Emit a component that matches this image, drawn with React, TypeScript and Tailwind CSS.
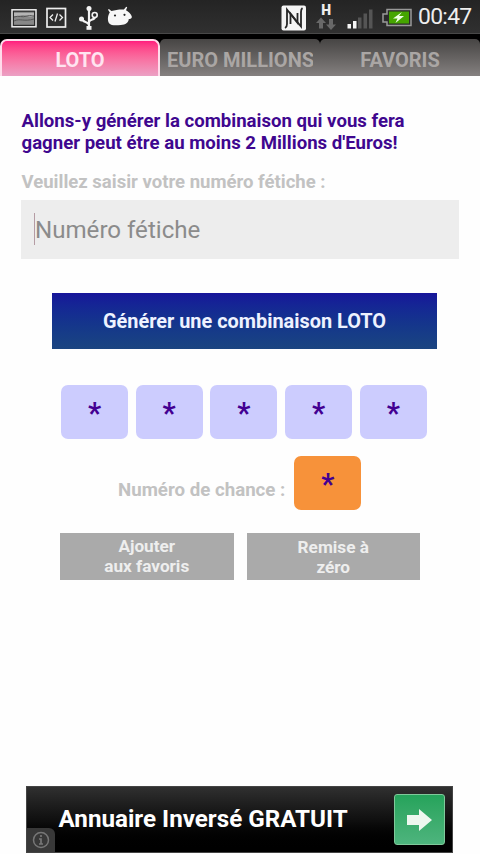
import React from "react";

function StatusBar() {
  return (
    <header className="h-[34px] shrink-0 flex items-center justify-between bg-linear-to-b from-[#242424] to-[#303030] border-b border-[#484848] pl-[11px] pr-[8px]">
      <svg width="124" height="32" viewBox="0 0 124 32" fill="none">
        <rect x="1" y="8.800" width="24" height="17" stroke="#eee" strokeWidth="1.500" />
        <rect x="3" y="10.800" width="20" height="13" fill="#888" />
        <path d="M3 12h20v3c-5 2-8-1-11-1s-6 2-9 1z" fill="#b5b5b5" />
        <path d="M3 16c5-2 8 1 13-1 4-1 5 0 7 0M3 20c6-3 10 1 20-2" stroke="#555" />
        <rect x="36" y="7.500" width="18.500" height="18.500" stroke="#eee" strokeWidth="1.700" />
        <path d="m42 13.500-3 3 3 3M48.500 13.500l3 3-3 3M46.500 12.500l-2.500 8" stroke="#eee" strokeWidth="1.300" />
        <path d="M78 26V8M78 24c-1-4-7-2-7-7M78 21c1-3 6-2 6-5" stroke="#f4f4f4" strokeWidth="2.200" />
        <circle cx="78" cy="7.500" r="2.500" fill="#f4f4f4" />
        <circle cx="70.500" cy="18" r="2.500" fill="#f4f4f4" />
        <circle cx="83.700" cy="14" r="2.500" stroke="#f4f4f4" strokeWidth="1.600" />
        <rect x="75.500" y="25" width="5" height="3.800" fill="#f4f4f4" />
        <path d="M98.800 11.500 97 8.800l.9-.7 2.500 2c4-1.300 8-1.800 12.500-1.600l2.300-2.800 1 .6-1.200 3c2.500 1.500 5.200 3.700 5.800 6.200.4 2-1.500 2.500-3 2.500-.5 4-3 5.500-8 6-5 .6-10 .5-11.500-1.500-2-2.500-1.800-8 .5-11z" fill="#f7f7f7" />
        <circle cx="104" cy="14.500" r="1.100" fill="#282828" />
        <circle cx="113.500" cy="13.800" r="1.100" fill="#282828" />
      </svg>
      <div className="flex items-center">
        <svg width="133" height="32" viewBox="280 0 133 32" fill="none">
          <rect x="281.500" y="4.500" width="24.500" height="25" rx="2" fill="#f5f5f5" />
          <path d="M285 27q2-1 2-4V8.500l10.500 13.500V12" stroke="#262626" strokeWidth="1.800" />
          <path d="M302.500 7q-1.500 1-1.500 4v14.500L290.500 12.500V23" stroke="#262626" strokeWidth="1.800" />
          <text x="321.300" y="14.200" fill="#eee" fontSize="14" fontWeight="900" fontFamily="Roboto, sans-serif">H</text>
          <path d="m321 16.500 5 5.500h-3v5.500h-4V22h-3zM331 29l-5-5.500h3V18h4v5.500h3z" fill="#686868" />
          <path d="M347.500 23h3.500v4.500h-3.500zM353 20h3.500v7.500H353z" fill="#f5f5f5" />
          <path d="M358 16.500h3.500v11H358zM363.500 12.500h3.500v15h-3.500zM369 8.500h3.500v19H369z" fill="#555" />
          <path d="M387 8.500h24v16h-24v-3.500h-4v-8h4z" stroke="#999" strokeWidth="1.500" />
          <path d="M389 10.500h20v12h-20z" fill="#45a500" />
          <path d="m402 11-9 6.500h4.500l-2 4.500 8.500-7h-5z" fill="#efffe5" />
        </svg>
        <span className="ml-[5px] w-[54px] pt-px text-[22.900px] leading-8 tracking-[-0.7px] whitespace-nowrap text-[#eee]">00:47</span>
      </div>
    </header>
  );
}

function Tabs() {
  return (
    <nav className="h-[42px] shrink-0 bg-black pt-[5px] flex text-[20px] font-bold">
      <div className="w-[160px] h-[37px] rounded-t-[7px] border-2 border-b-0 border-[#ffdceb] bg-linear-to-b from-[#ff1b7e] to-[#eba0c4] flex items-center justify-center text-[#ffe4f0] pt-[3px]">LOTO</div>
      <div className="w-[160px] h-[37px] rounded-t-[5px] bg-linear-to-b from-[#474544] to-[#858180] flex items-center pl-[7px] pt-[5px] text-[#aaa6a4]">
        <span className="w-[146px] overflow-hidden whitespace-nowrap">EURO MILLIONS</span>
      </div>
      <div className="w-[160px] h-[37px] rounded-t-[5px] bg-linear-to-b from-[#474544] to-[#858180] flex items-center justify-center pt-[5px] text-[#aaa6a4]">FAVORIS</div>
    </nav>
  );
}

function Ball({ chance = false }: { chance?: boolean }) {
  return (
    <div className={`w-[67px] h-[54px] shrink-0 rounded-[7px] flex justify-center pt-[11px] text-[29px] leading-[34px] font-bold text-[#430092] ${chance ? "bg-[#f7923a]" : "bg-[#ccccfe]"}`}>*</div>
  );
}

export default function App() {
  return (
    <div className="w-[480px] h-[854px] bg-[#fefefe] overflow-hidden flex flex-col font-['Roboto',sans-serif]">
      <StatusBar />
      <Tabs />
      <main className="flex-1 flex flex-col">
        <h1 className="mt-[34px] ml-[21.500px] text-[18.620px] leading-[22px] font-bold text-[#3f078f] whitespace-nowrap">
          Allons-y générer la combinaison qui vous fera<br />gagner peut étre au moins 2 Millions d'Euros!
        </h1>
        <label className="mt-[16px] ml-[21.500px] text-[18.550px] leading-[24px] font-bold text-[#c2c2c2] whitespace-nowrap">Veuillez saisir votre numéro fétiche :</label>
        <div className="mt-[6px] ml-[21px] w-[438px] h-[59px] bg-[#ededed] flex items-center pl-[13px] pt-[2px] text-[24.100px] text-[#8b8b8b]">
          <i className="w-px h-[32px] mb-[4px] bg-[#b59ca4]" />
          <span>Numéro fétiche</span>
        </div>
        <button className="mt-[34px] ml-[52px] w-[385px] h-[56px] pt-[2px] bg-linear-to-b from-[#17159a] to-[#1b4580] text-[19.900px] font-bold text-[#eef2ff]">Générer une combinaison LOTO</button>
        <div className="mt-[36px] ml-[61px] flex gap-[7.700px]">
          <Ball /><Ball /><Ball /><Ball /><Ball />
        </div>
        <div className="mt-[17px] ml-[118px] flex">
          <span className="w-[176.300px] pt-[22px] text-[18.700px] leading-[24px] font-bold text-[#c2c2c2] whitespace-nowrap">Numéro de chance :</span>
          <Ball chance />
        </div>
        <div className="mt-[23px] ml-[60px] flex gap-[13px] text-[17.200px] leading-5 font-bold text-[#eee]">
          <button className="w-[173.500px] h-[47px] bg-[#aaa] pb-[1px]">Ajouter<br />aux favoris</button>
          <button className="w-[173.500px] h-[47px] bg-[#aaa] pt-[1px]">Remise à<br />zéro</button>
        </div>
      </main>
      <footer className="w-[427px] h-[67px] ml-[26px] mb-[1px] shrink-0 flex border border-[#444] bg-linear-to-b from-[#303030] via-[#101010] to-black">
        <div className="self-end w-[28px] h-[24px] rounded-tr-[6px] bg-[#383838] flex items-center justify-center">
          <svg width="18" height="18" viewBox="0 0 18 18" fill="none" stroke="#777">
            <circle cx="9" cy="9" r="7.500" strokeWidth="1.500" />
            <path d="M9 4v2M7 8h2v5M7 13h4" strokeWidth="1.700" />
          </svg>
        </div>
        <strong className="ml-[3.500px] w-[335.500px] leading-[65px] text-[24.200px] text-white whitespace-nowrap">Annuaire Inversé GRATUIT</strong>
        <div className="mt-[7px] w-[51px] h-[51px] rounded-[3px] border border-[#7fc99a] bg-linear-to-b from-[#25a35b] to-[#4db47d] flex items-center justify-center">
          <svg width="25" height="22" viewBox="0 0 25 22"><path d="M0 6h12V0l13 11-13 11v-6H0z" fill="#eef7ef" /></svg>
        </div>
      </footer>
    </div>
  );
}
